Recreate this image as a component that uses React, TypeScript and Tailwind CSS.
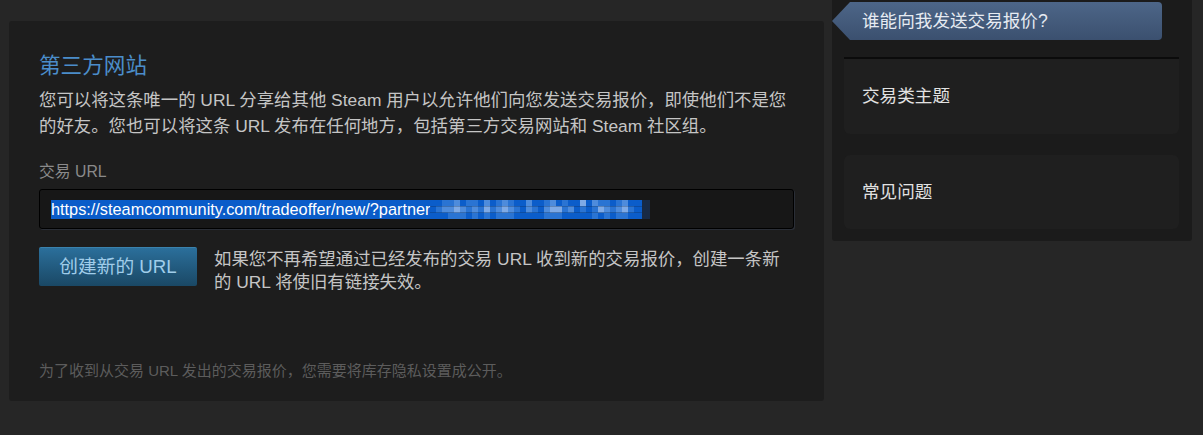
import React from 'react';

const blurRows = [
  '001120110201210020012010030211012000',
  '012232121312321021023312010132123100',
  '000111010101110000011100000101011000',
];
const blurShades = ['#0b5dca', '#2a74d3', '#4e8cdc', '#7eaae6'];

function BlurredToken() {
  return (
    <svg width="220" height="19" viewBox="0 0 220 19" className="block">
      {blurRows.map((row, r) =>
        row.split('').map((c, i) => (
          <rect key={`${r}-${i}`} x={i * 6} y={r * 6.34} width="6" height="6.34" fill={blurShades[Number(c)]} />
        ))
      )}
      <rect x="212" y="0" width="8" height="19" fill="#182a45" />
    </svg>
  );
}

function TabArrow() {
  return (
    <svg width="18" height="38" viewBox="0 0 18 38" className="block shrink-0">
      <defs>
        <linearGradient id="tabg" x1="0" y1="0" x2="0" y2="1">
          <stop offset="0" stopColor="#4d6688" />
          <stop offset="1" stopColor="#3b506f" />
        </linearGradient>
      </defs>
      <polygon points="18,0 0,19 18,38" fill="url(#tabg)" />
    </svg>
  );
}

export default function App() {
  return (
    <div className="w-[1203px] h-[435px] bg-[#262626] flex font-['Liberation_Sans','Noto_Sans_CJK_SC',sans-serif] overflow-hidden">
      {/* main panel */}
      <section className="ml-[9px] mt-[21px] w-[815px] h-[380px] bg-[#1d1d1d] rounded-[3px] pl-[30px] pr-[30px] pt-[30px] pb-[20px] flex flex-col">
        <h2 className="text-[21.6px] leading-[30px] text-[#4b8dca]">第三方网站</h2>
        <p className="mt-[6px] text-[17.4px] leading-[26px] text-[#c5c5c5]">
          您可以将这条唯一的 URL 分享给其他 Steam 用户以允许他们向您发送交易报价，即使他们不是您的好友。您也可以将这条 URL 发布在任何地方，包括第三方交易网站和 Steam 社区组。
        </p>
        <div className="mt-[23px] text-[15.8px] leading-[20px] text-[#8a8a8a]">交易 URL</div>
        <div className="mt-[7px] h-[40px] bg-[#171717] border border-black rounded-[3px] shadow-[1px_1px_0_0_#2a2e36] pl-[11px] flex items-center">
          <span className="bg-[#0a5cc9] text-white text-[16.3px] leading-[19px] h-[19px] whitespace-nowrap">
            https://steamcommunity.com/tradeoffer/new/?partner
          </span>
          <BlurredToken />
        </div>
        <div className="mt-[18px] flex gap-[17px]">
          <button className="w-[158px] h-[39px] shrink-0 rounded-[2px] bg-gradient-to-b from-[#2b6f9b] to-[#1a4865] border-t border-[#3a82ad] text-[#a0cdea] text-[18.7px] leading-[38px]">
            创建新的 URL
          </button>
          <p className="pt-[1px] text-[17.4px] leading-[23px] text-[#c5c5c5]">
            如果您不再希望通过已经发布的交易 URL 收到新的交易报价，创建一条新的 URL 将使旧有链接失效。
          </p>
        </div>
        <p className="mt-auto text-[15px] leading-[20px] text-[#5c5c5c]">
          为了收到从交易 URL 发出的交易报价，您需要将库存隐私设置成公开。
        </p>
      </section>

      {/* right column */}
      <aside className="ml-[8px] w-[360px] h-[241px] bg-[#1b1b1b] rounded-b-[3px] pt-[2px] pr-[13px] pb-[12px] flex flex-col">
        <div className="flex h-[38px]">
          <TabArrow />
          <div className="w-[312px] h-[38px] rounded-r-[4px] bg-gradient-to-b from-[#4d6688] to-[#3b506f] pl-[12px] flex items-center text-[17.6px] text-[#e6ebf2]">
            谁能向我发送交易报价?
          </div>
        </div>
        <div className="ml-[12px] mt-[17px] h-[2px] bg-[#0b0b0b]" />
        <div className="ml-[12px] h-[75px] bg-[#1f1f1f] rounded-b-[6px] pl-[18px] flex items-center text-[17.6px] text-[#e2e2e2]">
          交易类主题
        </div>
        <div className="ml-[12px] mt-[21px] h-[74px] bg-[#1f1f1f] rounded-[6px] pl-[18px] flex items-center text-[17.6px] text-[#e2e2e2]">
          常见问题
        </div>
      </aside>
    </div>
  );
}
